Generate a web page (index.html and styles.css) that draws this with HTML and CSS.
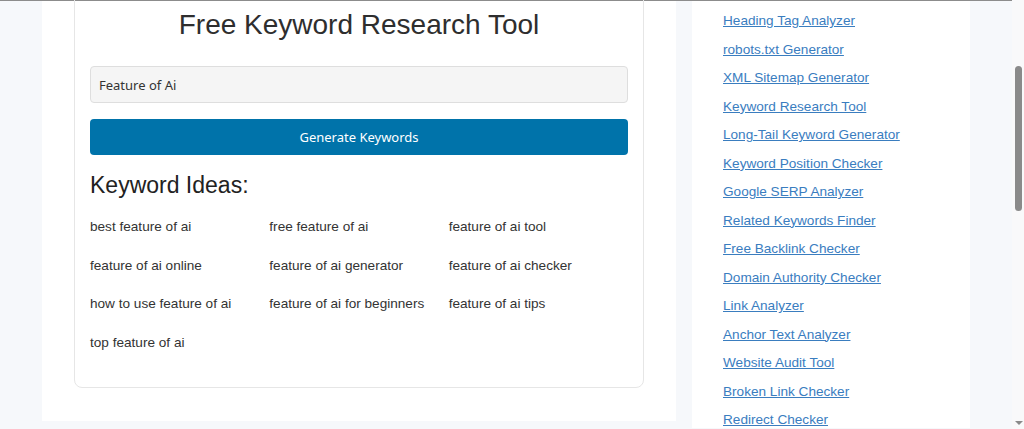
FILE: index.html
```html
<!DOCTYPE html>
<html lang="en">
<head>
  <meta charset="UTF-8">
  <meta name="viewport" content="width=device-width, initial-scale=1.0">
  <title>Free Keyword Research Tool</title>
  <link rel="stylesheet" href="styles.css">
</head>
<body>
  <div class="page">
    <!-- Contenido principal -->
    <main class="main-panel">
      <div class="tool-card">
        <h1>Free Keyword Research Tool</h1>
        <input type="text" class="keyword-input" value="Feature of Ai">
        <button class="generate-btn">Generate Keywords</button>
        <h3>Keyword Ideas:</h3>
        <div class="keyword-grid">
          <div>best feature of ai</div>
          <div>free feature of ai</div>
          <div>feature of ai tool</div>
          <div>feature of ai online</div>
          <div>feature of ai generator</div>
          <div>feature of ai checker</div>
          <div>how to use feature of ai</div>
          <div>feature of ai for beginners</div>
          <div>feature of ai tips</div>
          <div>top feature of ai</div>
        </div>
      </div>
    </main>

    <!-- Sidebar de herramientas -->
    <aside class="sidebar">
      <ul class="tool-links">
        <li><a href="#">Heading Tag Analyzer</a></li>
        <li><a href="#">robots.txt Generator</a></li>
        <li><a href="#">XML Sitemap Generator</a></li>
        <li><a href="#">Keyword Research Tool</a></li>
        <li><a href="#">Long-Tail Keyword Generator</a></li>
        <li><a href="#">Keyword Position Checker</a></li>
        <li><a href="#">Google SERP Analyzer</a></li>
        <li><a href="#">Related Keywords Finder</a></li>
        <li><a href="#">Free Backlink Checker</a></li>
        <li><a href="#">Domain Authority Checker</a></li>
        <li><a href="#">Link Analyzer</a></li>
        <li><a href="#">Anchor Text Analyzer</a></li>
        <li><a href="#">Website Audit Tool</a></li>
        <li><a href="#">Broken Link Checker</a></li>
        <li><a href="#">Redirect Checker</a></li>
      </ul>
    </aside>
  </div>

  <!-- Barra de scroll -->
  <div class="scrollbar">
    <div class="scroll-thumb"></div>
    <div class="scroll-arrow"></div>
  </div>
</body>
</html>
```

FILE: styles.css
```css
:root {
  --primary-color: #0073aa;
  --link-color: #3a7dbf;
  --background-color: #f6f8fb;
  --text-color: #333;
}

body {
  font-family: 'Liberation Sans', Arial, sans-serif;
  margin: 0;
  padding: 0;
  background-color: var(--background-color);
  color: var(--text-color);
  overflow: hidden;
}

.page {
  width: 1012px;
  height: 428px;
  border-top: 1px solid #8c8c8c;
  display: flex;
  align-items: flex-start;
  padding-left: 42px;
  box-sizing: border-box;
}

/* Panel principal */
.main-panel {
  width: 634px;
  background-color: white;
  padding: 0 32px 33px;
  box-sizing: border-box;
}

.tool-card {
  margin-top: -12px;
  border: 1px solid #e6e6e6;
  border-radius: 8px;
  padding: 18px 15px 25px;
}

.tool-card h1 {
  margin: 0 0 24px;
  font-size: 28px;
  line-height: 34px;
  font-weight: normal;
  text-align: center;
  color: #2e2e2e;
}

.keyword-input {
  display: block;
  width: 100%;
  height: 37px;
  box-sizing: border-box;
  padding: 0 8px;
  border: 1px solid #dedede;
  border-radius: 4px;
  background-color: #f5f5f5;
  font-family: 'Noto Sans', sans-serif;
  font-size: 13px;
  color: #333;
}

.generate-btn {
  display: block;
  width: 100%;
  height: 36px;
  margin-top: 16px;
  border: none;
  border-radius: 4px;
  background-color: var(--primary-color);
  color: white;
  font-family: 'Noto Sans', sans-serif;
  font-size: 13px;
}

.tool-card h3 {
  margin: 17px 0 10px;
  font-size: 23px;
  line-height: 26px;
  font-weight: normal;
  color: #222;
}

.keyword-grid {
  display: grid;
  grid-template-columns: repeat(3, 1fr);
  grid-auto-rows: 38.5px;
  align-items: center;
  font-size: 13.6px;
  line-height: 20px;
  color: #333;
}

/* Sidebar */
.sidebar {
  width: 278px;
  height: 428px;
  margin-left: 16px;
  background-color: white;
  padding: 6px 0 0 31px;
  box-sizing: border-box;
}

.tool-links {
  list-style: none;
  margin: 0;
  padding: 0;
}

.tool-links li {
  font-size: 13.6px;
  line-height: 28.5px;
}

.tool-links a {
  color: var(--link-color);
  text-decoration: underline;
}

/* Scrollbar */
.scrollbar {
  position: fixed;
  top: 0;
  right: 0;
  width: 12px;
  height: 100%;
  background-color: #f9f9fa;
}

.scroll-thumb {
  position: absolute;
  top: 66px;
  left: 3px;
  width: 7px;
  height: 145px;
  border-radius: 4px;
  background-color: #8a8a8a;
}

.scroll-arrow {
  position: absolute;
  bottom: 4px;
  left: 3px;
  width: 0;
  height: 0;
  border-left: 4px solid transparent;
  border-right: 4px solid transparent;
  border-top: 4px solid #8a8a8a;
}
```
